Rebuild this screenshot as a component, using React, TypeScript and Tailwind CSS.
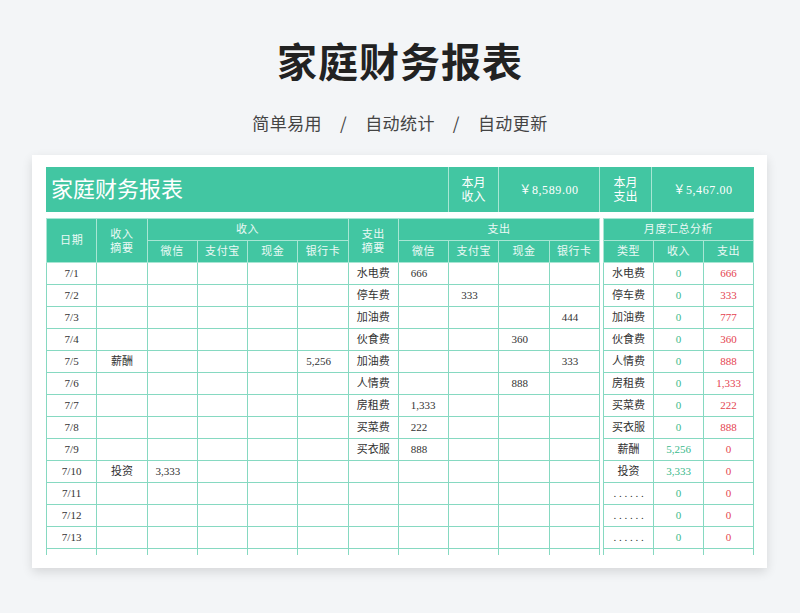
const G = "bg-[#42c6a2]";
const font = { fontFamily: '"Liberation Serif", "Noto Sans CJK SC", serif' };

type Row = { d: string; ri?: string; inc?: [number, string]; ex?: string; exv?: [number, string] };
const rows: Row[] = [
  { d: "7/1", ex: "水电费", exv: [0, "666"] },
  { d: "7/2", ex: "停车费", exv: [1, "333"] },
  { d: "7/3", ex: "加油费", exv: [3, "444"] },
  { d: "7/4", ex: "伙食费", exv: [2, "360"] },
  { d: "7/5", ri: "薪酬", inc: [3, "5,256"], ex: "加油费", exv: [3, "333"] },
  { d: "7/6", ex: "人情费", exv: [2, "888"] },
  { d: "7/7", ex: "房租费", exv: [0, "1,333"] },
  { d: "7/8", ex: "买菜费", exv: [0, "222"] },
  { d: "7/9", ex: "买衣服", exv: [0, "888"] },
  { d: "7/10", ri: "投资", inc: [0, "3,333"] },
  { d: "7/11" },
  { d: "7/12" },
  { d: "7/13" },
  { d: "" },
];
const summary = [
  ["水电费", "0", "666"], ["停车费", "0", "333"], ["加油费", "0", "777"], ["伙食费", "0", "360"],
  ["人情费", "0", "888"], ["房租费", "0", "1,333"], ["买菜费", "0", "222"], ["买衣服", "0", "888"],
  ["薪酬", "5,256", "0"], ["投资", "3,333", "0"], [". . . . . .", "0", "0"], [". . . . . .", "0", "0"], [". . . . . .", "0", "0"], ["", "", ""],
];

const th = `${G} text-white/90 font-normal border border-[#a8e6d4] text-[11px] tracking-wider`;
const td = "border border-[#86d9c1] h-[22px] text-[11px] p-0";

export default function App() {
  return (
    <div className="w-[800px] h-[613px] bg-[#f3f5f7] overflow-hidden text-[#333]" style={font}>
      <h1 className="pt-[36px] text-center text-[40px] leading-[48px] font-bold text-[#222] tracking-wide" style={{ fontFamily: '"Noto Sans CJK SC", sans-serif' }}>家庭财务报表</h1>
      <p className="mt-[27px] text-center text-[17px] leading-[24px] text-[#444] tracking-wide" style={{ fontFamily: '"Noto Sans CJK SC", sans-serif' }}>
        简单易用<span className="mx-[18px]">/</span>自动统计<span className="mx-[18px]">/</span>自动更新
      </p>
      <div className="ml-[32px] mt-[20px] w-[735px] h-[413px] bg-white shadow-[0_4px_10px_rgba(0,0,0,0.12)] pt-[12px] pl-[14px]">
        <div className={`flex w-[708px] h-[45px] ${G} text-white divide-x divide-[#a8e6d4]`}>
          <div className="w-[403px] flex items-center pl-[5px] text-[22px]">家庭财务报表</div>
          <div className="w-[50px] flex items-center justify-center text-center text-[12px] leading-[14px]">本月<br />收入</div>
          <div className="w-[101px] flex items-center justify-center text-[12px] tracking-wider">￥8,589.00</div>
          <div className="w-[52px] flex items-center justify-center text-center text-[12px] leading-[14px]">本月<br />支出</div>
          <div className="w-[102px] flex items-center justify-center text-[12px] tracking-wider">￥5,467.00</div>
        </div>
        <div className="mt-[6px] flex gap-[3px] h-[337px] overflow-hidden items-start">
          <table className="w-[554px] table-fixed border-collapse">
            <thead>
              <tr className="h-[22px]">
                <th rowSpan={2} className={th}>日期</th>
                <th rowSpan={2} className={`${th} leading-[14px]`}>收入<br />摘要</th>
                <th colSpan={4} className={th}>收入</th>
                <th rowSpan={2} className={`${th} leading-[14px]`}>支出<br />摘要</th>
                <th colSpan={4} className={th}>支出</th>
              </tr>
              <tr className="h-[22px]">
                {["微信", "支付宝", "现金", "银行卡", "微信", "支付宝", "现金", "银行卡"].map((t, i) => (
                  <th key={i} className={th}>{t}</th>
                ))}
              </tr>
            </thead>
            <tbody>
              {rows.map((r, i) => (
                <tr key={i}>
                  <td className={`${td} text-center`}>{r.d}</td>
                  <td className={`${td} text-center`}>{r.ri}</td>
                  {[0, 1, 2, 3].map((c) => (
                    <td key={c} className={`${td} pl-[8px]`}>{r.inc && r.inc[0] === c ? r.inc[1] : ""}</td>
                  ))}
                  <td className={`${td} text-center`}>{r.ex}</td>
                  {[0, 1, 2, 3].map((c) => (
                    <td key={c} className={`${td} pl-[12px]`}>{r.exv && r.exv[0] === c ? r.exv[1] : ""}</td>
                  ))}
                </tr>
              ))}
            </tbody>
          </table>
          <table className="w-[151px] table-fixed border-collapse">
            <thead>
              <tr className="h-[22px]">
                <th colSpan={3} className={th}>月度汇总分析</th>
              </tr>
              <tr className="h-[22px]">
                {["类型", "收入", "支出"].map((t) => (
                  <th key={t} className={th}>{t}</th>
                ))}
              </tr>
            </thead>
            <tbody>
              {summary.map((s, i) => (
                <tr key={i}>
                  <td className={`${td} text-center`}>{s[0]}</td>
                  <td className={`${td} text-center text-[#3cb98c]`}>{s[1]}</td>
                  <td className={`${td} text-center text-[#e4434f]`}>{s[2]}</td>
                </tr>
              ))}
            </tbody>
          </table>
        </div>
      </div>
    </div>
  );
}
